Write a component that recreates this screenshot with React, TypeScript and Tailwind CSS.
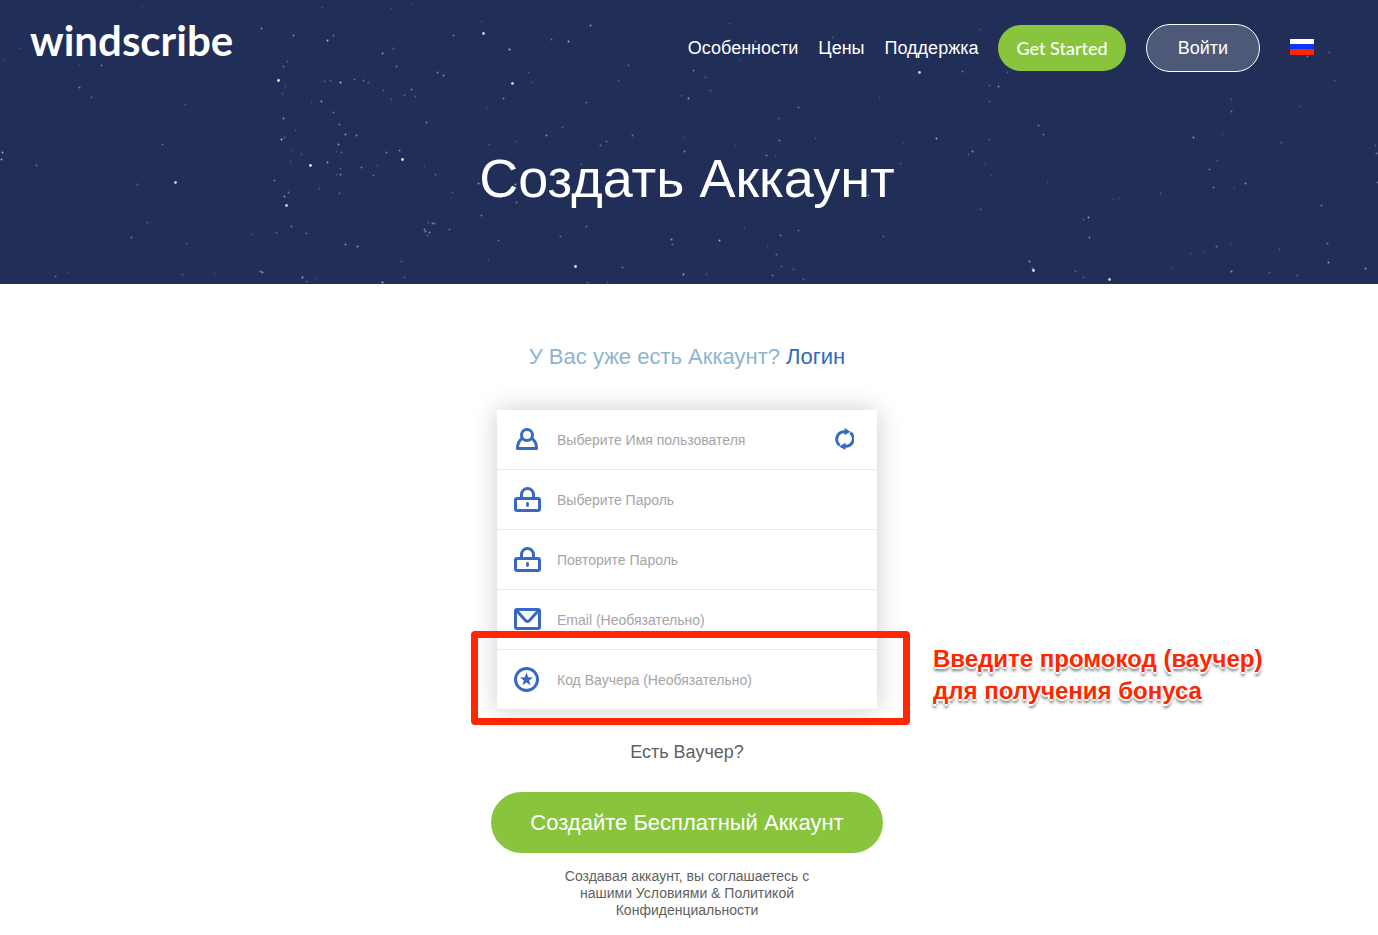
import type { ReactNode } from "react";

// [x, y, opacity]
const stars: [number, number, number][] = [
  [79, 87, 0.5], [91, 97, 0.3], [101, 65, 0.4], [79, 64, 0.15], [185, 104, 0.25], [162, 144, 0.35], [175, 182, 0.9],
  [137, 184, 0.3], [36, 165, 0.35], [2, 152, 0.7], [1, 159, 0.7], [147, 222, 0.25], [131, 237, 0.4], [186, 243, 0.3],
  [55, 276, 0.35], [67, 272, 0.15], [182, 274, 0.25], [214, 273, 0.2], [261, 28, 0.5], [293, 35, 0.5], [333, 35, 0.35],
  [327, 40, 0.8], [382, 53, 0.6], [393, 48, 0.3], [396, 66, 0.4], [287, 61, 0.3], [283, 66, 0.35], [278, 80, 1],
  [285, 86, 0.2], [282, 93, 0.2], [330, 80, 0.3], [324, 81, 0.25], [340, 82, 0.8], [354, 79, 0.35], [363, 80, 0.35],
  [368, 82, 0.25], [321, 101, 0.6], [311, 102, 0.2], [333, 112, 0.4], [339, 124, 0.35], [283, 118, 0.6], [281, 139, 0.8],
  [284, 137, 0.3], [295, 130, 0.2], [345, 134, 0.6], [356, 135, 0.5], [338, 144, 0.6], [341, 152, 0.3], [336, 151, 0.2],
  [310, 165, 1], [327, 162, 0.6], [291, 150, 0.2], [301, 154, 0.2], [340, 168, 0.3], [340, 174, 0.5], [336, 174, 0.25],
  [361, 167, 0.45], [373, 175, 0.35], [377, 165, 0.2], [386, 152, 0.45], [399, 150, 0.45], [402, 159, 1], [274, 180, 0.4],
  [290, 161, 0.2], [284, 196, 0.6], [288, 192, 0.4], [286, 205, 0.9], [319, 188, 0.25], [339, 193, 0.3], [291, 226, 0.4],
  [276, 232, 0.3], [306, 233, 0.35], [345, 244, 0.55], [357, 246, 0.6], [252, 234, 0.2], [260, 271, 0.5], [262, 272, 0.6],
  [302, 277, 0.7], [306, 281, 0.25], [315, 278, 0.2], [382, 282, 0.8], [401, 261, 0.3], [404, 277, 0.3], [432, 223, 0.5],
  [434, 223, 0.35], [428, 222, 0.3], [424, 229, 0.5], [425, 231, 0.5], [429, 232, 0.5], [427, 235, 0.3], [449, 229, 0.35],
  [437, 72, 0.5], [443, 75, 0.5], [411, 89, 0.4], [415, 96, 0.3], [404, 95, 0.3], [391, 99, 0.25], [383, 90, 0.3],
  [426, 122, 0.45], [453, 35, 0.4], [452, 192, 0.25], [435, 174, 0.3], [424, 166, 0.2], [20, 48, 0.2], [3, 59, 0.2],
  [483, 33, 0.9], [481, 21, 0.15], [509, 49, 0.8], [512, 83, 0.9], [503, 98, 0.5], [528, 72, 0.25], [531, 82, 0.2],
  [551, 39, 0.35], [568, 41, 0.7], [590, 25, 0.6], [486, 107, 0.2], [586, 102, 0.35], [618, 80, 0.25], [628, 65, 0.3],
  [546, 135, 0.55], [562, 127, 0.3], [489, 144, 0.25], [516, 141, 0.2], [600, 145, 0.35], [606, 141, 0.35],
  [632, 135, 0.4], [581, 164, 0.3], [478, 183, 0.6], [515, 184, 0.6], [516, 202, 0.4], [481, 215, 0.4], [498, 240, 0.35],
  [560, 236, 0.35], [586, 226, 0.35], [575, 266, 1], [488, 259, 0.2], [622, 267, 0.4], [587, 282, 0.3], [607, 282, 0.2],
  [671, 239, 0.6], [672, 244, 0.3], [719, 240, 0.7], [683, 274, 0.7], [706, 274, 0.2], [780, 235, 0.4], [798, 230, 0.35],
  [776, 254, 0.35], [767, 246, 0.2], [772, 275, 0.35], [781, 266, 0.25], [793, 269, 0.25], [803, 279, 0.3],
  [744, 227, 0.2], [688, 98, 0.6], [693, 70, 0.4], [705, 77, 0.25], [710, 90, 0.25], [681, 95, 0.2], [798, 107, 0.4],
  [778, 118, 0.25], [779, 140, 0.45], [766, 155, 0.45], [775, 156, 0.2], [684, 151, 0.5], [683, 137, 0.2],
  [674, 185, 0.6], [868, 195, 0.4], [900, 163, 0.25], [879, 97, 0.2], [883, 236, 0.3], [903, 143, 0.15],
  [832, 37, 0.25], [755, 41, 0.5], [729, 23, 0.2], [740, 60, 0.2], [815, 138, 0.2], [735, 145, 0.15], [919, 72, 0.9],
  [962, 71, 0.4], [998, 86, 0.55], [989, 85, 0.25], [1007, 72, 0.25], [989, 101, 0.25], [980, 29, 0.2], [936, 138, 0.7],
  [972, 151, 0.6], [968, 154, 0.25], [989, 139, 0.3], [1038, 125, 0.4], [1043, 134, 0.4], [985, 164, 0.2],
  [991, 175, 0.2], [1047, 182, 0.2], [980, 209, 0.25], [1088, 217, 0.6], [1083, 219, 0.3], [1089, 237, 0.5],
  [1029, 261, 0.6], [1033, 270, 1], [1032, 268, 0.4], [1109, 279, 0.9], [1075, 271, 0.3], [1083, 277, 0.25],
  [1231, 99, 0.25], [1231, 111, 0.4], [1193, 137, 0.6], [1222, 134, 0.2], [1281, 142, 0.25], [1300, 106, 0.2],
  [1209, 169, 0.4], [1217, 160, 0.25], [1213, 187, 0.4], [1245, 183, 0.55], [1160, 193, 0.25], [1234, 187, 0.15],
  [1321, 205, 0.4], [1327, 243, 0.4], [1328, 262, 0.6], [1365, 268, 0.6], [1231, 271, 0.6], [1269, 272, 0.3],
  [1216, 246, 0.4], [1230, 244, 0.2], [1203, 251, 0.2], [1279, 249, 0.25], [1297, 275, 0.25], [1190, 253, 0.2],
  [1172, 267, 0.2], [1334, 80, 0.25], [1307, 56, 0.4], [1329, 52, 0.25], [1375, 145, 0.3], [1376, 153, 0.4],
  [1377, 182, 0.4], [1113, 199, 0.15], [1119, 198, 0.15], [322, 7, 0.2], [391, 8, 0.2], [412, 4, 0.15], [142, 6, 0.15],
];

const StarField = () => (
  <svg
    className="absolute inset-0 h-full w-full"
    viewBox="0 0 1378 284"
    preserveAspectRatio="xMidYMin slice"
    aria-hidden="true"
  >
    {stars.map(([x, y, opacity], i) => (
      <circle key={i} cx={x + 0.5} cy={y + 0.5} r={opacity > 0.8 ? 1.4 : 1} fill="#fff" opacity={opacity * 0.85} />
    ))}
  </svg>
);

const UserIcon = () => (
  <svg width="28" height="28" viewBox="0 0 28 28" fill="none" stroke="#3769c0" strokeWidth="3" aria-hidden="true">
    <circle cx="14" cy="9" r="5.5" />
    <path d="M9 12.500C5.500 15 4.500 18 4.500 22.500H23.500C23.500 18 22.500 15 19 12.500" strokeLinejoin="round" />
  </svg>
);

const LockIcon = () => (
  <svg width="28" height="28" viewBox="0 0 28 28" fill="none" stroke="#3769c0" strokeWidth="3" aria-hidden="true">
    <rect x="2.500" y="12.500" width="24" height="12" rx="1.500" />
    <path d="M8.500 12V8.500A6 6 0 0 1 20.500 8.500V12" />
    <path d="M14.500 17.500V19.500" strokeLinecap="round" strokeWidth="2.800" />
  </svg>
);

const MailIcon = () => (
  <svg width="28" height="28" viewBox="0 0 28 28" fill="none" stroke="#3769c0" strokeWidth="3" aria-hidden="true">
    <rect x="2.500" y="3.500" width="24" height="19" rx="1.500" />
    <path d="M4 5L12.500 14.500Q14.500 16.500 16.500 14.500L25 5" />
  </svg>
);

const StarIcon = () => (
  <svg width="28" height="28" viewBox="0 0 28 28" fill="none" aria-hidden="true">
    <circle cx="13.500" cy="13.500" r="11" stroke="#3769c0" strokeWidth="3" />
    <path
      d="M13.500 6.500L15.200 11.200L20 11.400L16.200 14.400L17.500 19.300L13.500 16.500L9.500 19.300L10.800 14.400L7 11.400L11.800 11.200Z"
      fill="#3769c0"
    />
  </svg>
);

const RefreshIcon = () => (
  <svg width="20" height="24" viewBox="0 0 20 24" fill="none" stroke="#3769c0" strokeWidth="3" aria-hidden="true">
    <path d="M5.700 17.300A7.500 7.500 0 0 1 11.500 3.900" />
    <path d="M16.300 4.700A7.500 7.500 0 0 1 10.500 18.100" />
    <path d="M10.500 0V7.300L16.500 3.700Z" fill="#3769c0" stroke="none" />
    <path d="M11.500 22V14.700L5 18.500Z" fill="#3769c0" stroke="none" />
  </svg>
);

type FieldProps = {
  id: string;
  type?: string;
  label: string;
  icon: ReactNode;
  children?: ReactNode;
};

const Field = ({ id, type = "text", label, icon, children }: FieldProps) => (
  <div className="relative flex h-[60px] items-center border-b border-[#ebebeb] px-4">
    <label htmlFor={id} className="shrink-0" aria-label={label}>
      {icon}
    </label>
    <input
      id={id}
      type={type}
      placeholder={label}
      className="ml-4 min-w-0 grow bg-transparent text-sm text-gray-700 outline-none placeholder:text-[#a5a5a5]"
    />
    {children}
  </div>
);

const Header = () => (
  <header className="relative bg-[#212e57] pb-[74px] text-white">
    <StarField />
    <div className="relative flex h-24 items-center justify-between pr-16 pl-[30px]">
      <a href="#" className="pb-4 font-[Lato] text-[42px] leading-none font-bold">
        windscribe
      </a>
      <nav className="flex items-center gap-5 text-lg">
        <a href="#features">Особенности</a>
        <a href="#pricing">Цены</a>
        <a href="#support">Поддержка</a>
        <a href="#start" className="rounded-full bg-[#88c53c] px-[18px] py-[9px] font-[Lato] font-medium">
          Get Started
        </a>
        <a href="#login" className="rounded-full border border-white bg-[#4e5978] px-[31px] py-[9px]">
          Войти
        </a>
        <button type="button" aria-label="Русский" className="ml-2.5 pb-0.5">
          <svg width="24" height="16" viewBox="0 0 24 16" aria-hidden="true">
            <rect width="24" height="6" fill="#fff" />
            <rect y="5" width="24" height="6" fill="#0b36f5" />
            <rect y="10" width="24" height="6" fill="#fd2600" />
          </svg>
        </button>
      </nav>
    </div>
    <h1 className="relative pt-[50px] pr-1 text-center text-[54px] leading-[64px]">Создать Аккаунт</h1>
  </header>
);

const App = () => (
  <div className="min-h-screen bg-white font-['Liberation_Sans',sans-serif]">
    <Header />

    <main className="flex flex-col items-center pt-[57px] pr-1 pb-4">
      <p className="text-[22px] leading-8 text-[#8db5d0]">
        У Вас уже есть Аккаунт?{" "}
        <a href="#login" className="text-[#2e6abf]">
          Логин
        </a>
      </p>

      <form className="mt-[37px] flex flex-col items-center">
        <div className="w-[380px] bg-white shadow-[0_0_24px_rgba(0,0,0,0.2)]">
          <Field id="username" label="Выберите Имя пользователя" icon={<UserIcon />}>
            <button type="button" aria-label="Обновить" className="mr-[7px]">
              <RefreshIcon />
            </button>
          </Field>
          <Field id="password" type="password" label="Выберите Пароль" icon={<LockIcon />} />
          <Field id="confirm" type="password" label="Повторите Пароль" icon={<LockIcon />} />
          <Field id="email" type="email" label="Email (Необязательно)" icon={<MailIcon />} />
          <Field id="voucher" label="Код Ваучера (Необязательно)" icon={<StarIcon />}>
            <div className="pointer-events-none absolute -top-[19px] -right-[33px] -bottom-4 -left-[26px] rounded-sm border-7 border-[#ff2600]" />
            <p className="absolute -top-[7px] left-[436px] text-2xl leading-8 font-bold whitespace-nowrap text-[#ff2600] [text-shadow:2px_0_0_#fff,-2px_0_0_#fff,0_2px_0_#fff,0_-2px_0_#fff,0_4px_3px_rgba(0,0,0,0.55)]">
              Введите промокод (ваучер)
              <br />
              для получения бонуса
            </p>
          </Field>
        </div>

        <a href="#voucher" className="mt-7 text-lg text-[#5f5f5f]">
          Есть Ваучер?
        </a>

        <button type="submit" className="mt-[26px] h-[61px] rounded-full bg-[#88c53c] px-[39px] text-[22px] text-white">
          Создайте Бесплатный Аккаунт
        </button>

        <p className="mt-[15px] text-center text-sm leading-[17px] text-[#5f5f5f]">
          Создавая аккаунт, вы соглашаетесь с
          <br />
          нашими <a href="#terms">Условиями</a> &amp;{" "}
          <a href="#privacy">
            Политикой
            <br />
            Конфиденциальности
          </a>
        </p>
      </form>
    </main>
  </div>
);

export default App;
